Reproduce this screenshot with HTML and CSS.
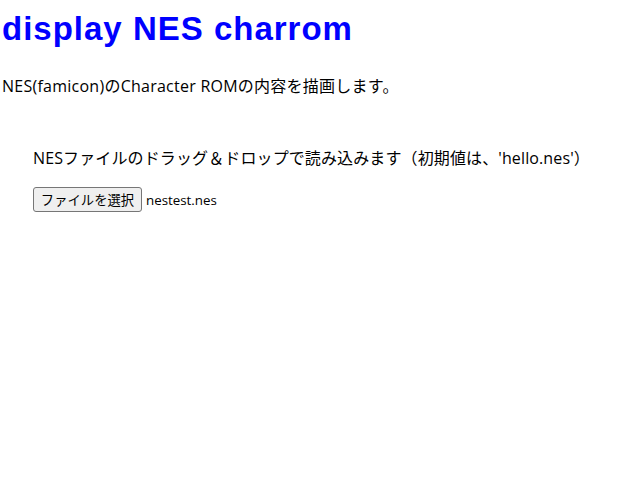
FILE: index.html
```html
<!DOCTYPE html>
<html lang="ja">
<head>
<meta charset="utf-8">
<title>display NES charrom</title>
<link rel="stylesheet" href="styles.css">
</head>
<body>
<h1 class="title">display NES charrom</h1>
<p class="lead">NES(famicon)のCharacter ROMの内容を描画します。</p>
<section class="drop">
  <p class="note">NESファイルのドラッグ＆ドロップで読み込みます（初期値は、'hello.nes'）</p>
  <div class="file-row">
    <button class="file-btn" type="button">ファイルを選択</button>
    <span class="file-name">nestest.nes</span>
  </div>
</section>
</body>
</html>
```
FILE: styles.css
```css
html, body {
  background: #ffffff;
}
body {
  margin: 0;
  padding: 0 2px;
  color: #000000;
  font-family: "Open Sans", "Noto Sans CJK JP", sans-serif;
  font-size: 16px;
}
.title {
  margin: 10px 0 0;
  font-family: "Liberation Sans", Arial, sans-serif;
  font-weight: bold;
  font-size: 33px;
  line-height: 37px;
  letter-spacing: 1px;
  color: #0000ff;
}
.lead {
  margin: 28px 0 0;
  line-height: 23px;
  letter-spacing: 0.25px;
}
.drop {
  margin: 49px 0 0 31px;
}
.note {
  margin: 0;
  line-height: 23px;
  letter-spacing: 0.12px;
}
.file-row {
  display: flex;
  align-items: center;
  gap: 4px;
  margin-top: 17px;
}
.file-btn {
  box-sizing: border-box;
  width: 109px;
  height: 25px;
  padding: 0;
  background: #efefef;
  border: 1px solid #767676;
  border-radius: 3px;
  color: #000000;
  font-family: "Noto Sans CJK JP", sans-serif;
  font-size: 13.33px;
  line-height: 1;
}
.file-name {
  font-family: "Open Sans", sans-serif;
  font-size: 13.33px;
}
```
